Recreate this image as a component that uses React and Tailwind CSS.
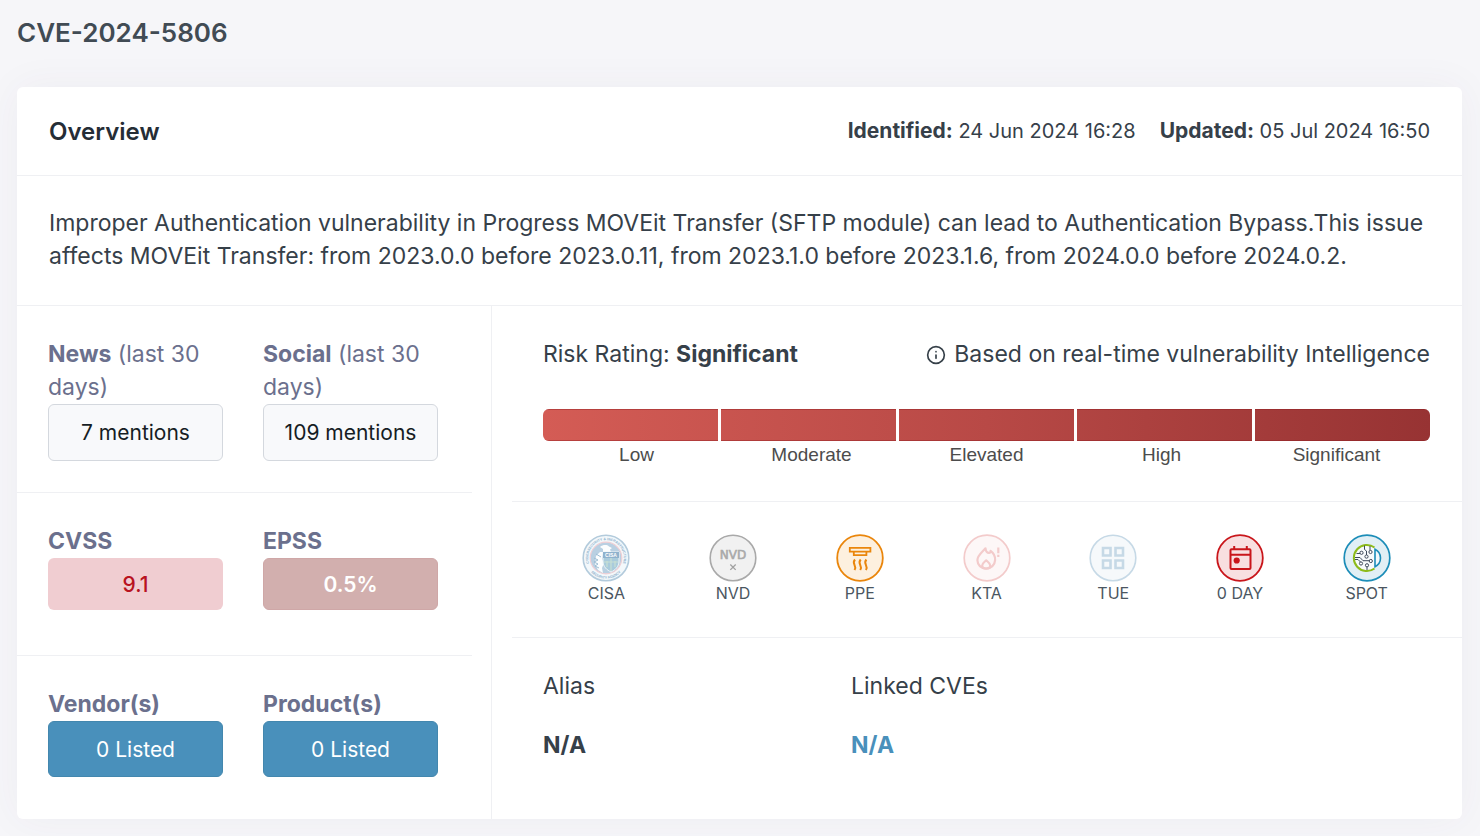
import { LuInfo } from 'react-icons/lu';

const levels = ['Low', 'Moderate', 'Elevated', 'High', 'Significant'];

function CisaIcon() {
    return (
        <svg viewBox="0 0 48 48" className="size-12" aria-hidden="true">
            <defs>
                <path id="cisa-top" d="M10.400 35.400a17.800 17.800 0 1 1 27.200 0" />
                <path id="cisa-bottom" d="M5.300 32.700a20.600 20.600 0 0 0 37.400 0" />
            </defs>
            <circle cx="24" cy="24" r="22.800" fill="#f3f8fb" stroke="#b3cbdc" strokeWidth="1.600" />
            <circle cx="24" cy="24" r="15.800" fill="#b9d0e2" stroke="#f0cfd4" strokeWidth="1.200" />
            <g fill="#8fb2cd" fontFamily="Liberation Sans, sans-serif" fontWeight="700" fontSize="3.500">
                <text><textPath href="#cisa-top" startOffset="50%" textAnchor="middle">CYBERSECURITY &amp; INFRASTRUCTURE</textPath></text>
                <text><textPath href="#cisa-bottom" startOffset="50%" textAnchor="middle">SECURITY AGENCY</textPath></text>
            </g>
            <path d="M18 13c3-2.500 7-2.500 9-.5l3 1.500-2 1.500 1 2.500H18l-4 4-1 8 3 6 5 3-1-5 2-5-2-4 1-6v-4z" fill="#fbfdfe" />
            <path d="M12 24l4 2-4 2 4 2-3 2 4 2M14 20l5 3" stroke="#9dbdd4" fill="none" />
            <path d="M21 18h16v9c0 6-4 9-8 11-4-2-8-5-8-11z" fill="#a9cbdc" stroke="#eef5f9" />
            <path d="M22 28h14M29 23v14M25 27v6M33 27v6" stroke="#c7dfd4" strokeWidth="1.200" />
            <rect x="21" y="18" width="16" height="6" fill="#8fb2cd" />
            <text x="29" y="22.800" textAnchor="middle" fontSize="5" fontWeight="700" fontFamily="Liberation Sans, sans-serif" fill="#fff">CISA</text>
        </svg>
    );
}

function NvdIcon() {
    return (
        <svg viewBox="0 0 48 48" className="size-12" aria-hidden="true">
            <circle cx="24" cy="24" r="22.800" fill="#f1f1f1" stroke="#a9a9a9" strokeWidth="1.600" />
            <text x="24" y="25" textAnchor="middle" fontSize="12" className="font-['DejaVu_Sans',sans-serif]" fill="#a9a9a9" stroke="#a9a9a9" strokeWidth=".6">NVD</text>
            <path d="M21.300 30.500l5.400 5.400M26.700 30.500l-5.400 5.400" stroke="#a0a0a0" strokeWidth="1.300" />
        </svg>
    );
}

function PpeIcon() {
    return (
        <svg viewBox="0 0 48 48" className="size-12" fill="none" stroke="#ea860c" strokeWidth="1.800" aria-hidden="true">
            <circle cx="24" cy="24" r="22.800" fill="#fdf0df" strokeWidth="1.800" />
            <path d="M13.800 13.800h20.600v3.800H13.800zM17.800 17.800v3.400h12.600v-3.400" />
            <path d="M19 25.500c-4 4.500 2.500 5.500-.5 10.500M24.700 25.500c-4 4.500 2.500 5.500-.5 10.500M30.400 25.500c-4 4.500 2.500 5.500-.5 10.500" strokeWidth="2" />
        </svg>
    );
}

function KtaIcon() {
    return (
        <svg viewBox="0 0 48 48" className="size-12" fill="none" stroke="#f3cbcb" strokeWidth="2.200" aria-hidden="true">
            <circle cx="24" cy="24" r="22.800" fill="#fdf7f7" strokeWidth="1.700" />
            <path d="M22.500 14.300c.3 3 2 4.500 3.500 4.500 1.200 0 1.700-.8 1.600-2 3.200 2.300 4.700 6 4.500 9.300-.3 5-4 8.400-9 8.400s-8.600-3.600-8.700-8.200c-.1-5 4.700-8 8.100-12z" strokeLinejoin="round" />
            <path d="M23.200 26.300c-2 1.800-4 3-4 5.100 0 2 1.800 3.200 4 3.200s4-1.200 4-3.200c0-2.100-2-3.300-4-5.100z" strokeLinejoin="round" />
            <path d="M35.300 13.500v5.800M35.300 20.800v2.200" />
        </svg>
    );
}

function TueIcon() {
    return (
        <svg viewBox="0 0 48 48" className="size-12" fill="none" stroke="#c6d9e6" strokeWidth="2.600" aria-hidden="true">
            <circle cx="24" cy="24" r="22.800" fill="#f6f9fb" strokeWidth="1.600" />
            <path d="M14 14h7.500v7.500H14zM26.500 14H34v7.500h-7.500zM14 26.500h7.500V34H14zM26.500 26.500H34V34h-7.500z" />
        </svg>
    );
}

function ZeroDayIcon() {
    return (
        <svg viewBox="0 0 48 48" className="size-12" fill="none" stroke="#c9161b" strokeWidth="2" aria-hidden="true">
            <circle cx="24" cy="24" r="22.800" fill="#f8dfe0" strokeWidth="1.800" />
            <rect x="14.500" y="15.300" width="20" height="19.700" rx="1" />
            <path d="M14.500 20.700h20M18.200 12v4M30.800 12v4" />
            <circle cx="20.700" cy="26.500" r="3.100" fill="#c9161b" stroke="none" />
        </svg>
    );
}

function SpotIcon() {
    return (
        <svg viewBox="0 0 48 48" className="size-12" fill="none" aria-hidden="true">
            <circle cx="24" cy="24" r="22.800" fill="#e1eff5" stroke="#1c8db8" strokeWidth="1.700" />
            <path d="M31.500 13.300a13 13 0 1 0 0 21.400z" fill="#f8fbfc" />
            <path d="M31.500 34.500a13 13 0 1 1 0-21" stroke="#8dbb1a" strokeWidth="2" />
            <path d="M32 15.300c3.600 1.800 5.500 5 5.500 8.700s-1.900 6.900-5.500 8.700z" fill="#f2f8fb" stroke="#1c8db8" strokeWidth="1.600" />
            <g stroke="#3f4b5c" strokeWidth="1">
                <path d="M12 23.500h5l3 3.200h7M12 25.500h3l3 3M21.500 11.500v4l2 1.500v4M27 12v4.500M13.500 19.500h3.500M24 36v-4" />
                <g fill="#fff">
                    <circle cx="18.500" cy="18.800" r="1.600" />
                    <circle cx="27.500" cy="18" r="1.600" />
                    <circle cx="23.500" cy="22.600" r="1.600" />
                    <circle cx="27.800" cy="27" r="1.600" />
                    <circle cx="18" cy="29.500" r="1.600" />
                    <circle cx="24" cy="31.300" r="1.600" />
                </g>
            </g>
        </svg>
    );
}

const indicators = [
    { label: 'CISA',  Icon: CisaIcon },
    { label: 'NVD',   Icon: NvdIcon },
    { label: 'PPE',   Icon: PpeIcon },
    { label: 'KTA',   Icon: KtaIcon },
    { label: 'TUE',   Icon: TueIcon },
    { label: '0 DAY', Icon: ZeroDayIcon },
    { label: 'SPOT',  Icon: SpotIcon },
];

function Stat({ label, note, children }) {
    return (
        <div className="flex flex-col text-[#6b708d]">
            <p><strong className="font-bold">{label}</strong>{note && ` ${note}`}</p>
            {children}
        </div>
    );
}

export default function App() {
    return (
        <main className="min-h-screen bg-[#f6f6f9] pl-[17px] pr-[18px] pb-[17px] font-['Inter',sans-serif] text-[23px] leading-[33px] text-[#364049]">
            <h1 className="pt-4 pb-[38px] text-[26px] font-semibold text-[#414b54]">CVE-2024-5806</h1>

            <section className="rounded-md bg-white shadow-[0_0_40px_rgba(82,63,105,0.05)]">
                <header className="flex items-center justify-between border-b border-[#eff0f3] px-8 py-[27px]">
                    <h2 className="text-[24px] font-semibold text-[#252d36]">Overview</h2>
                    <div className="flex gap-6 text-[20px]">
                        <p><strong className="text-[21px] font-bold">Identified:</strong> 24 Jun 2024 16:28</p>
                        <p><strong className="text-[21px] font-bold">Updated:</strong> 05 Jul 2024 16:50</p>
                    </div>
                </header>

                <p className="border-b border-[#eff0f3] px-8 pt-[31px] pb-8">
                    Improper Authentication vulnerability in Progress MOVEit Transfer (SFTP module) can lead to Authentication Bypass.This issue affects MOVEit Transfer: from 2023.0.0 before 2023.0.11, from 2023.1.0 before 2023.1.6, from 2024.0.0 before 2024.0.2.
                </p>

                <div className="flex">
                    {/* Scores */}
                    <div className="w-[475px] shrink-0 border-r border-[#eff0f3] pr-[19px]">
                        <div className="grid grid-cols-2 gap-10 border-b border-[#eff0f3] pl-[31px] pr-[34px] pt-8 pb-[31px]">
                            <Stat label="News" note="(last 30 days)">
                                <button className="h-[57px] rounded-md border border-[#d4d8de] bg-[#f8f9fb] text-[21px] text-[#161d24]">7 mentions</button>
                            </Stat>
                            <Stat label="Social" note="(last 30 days)">
                                <button className="h-[57px] rounded-md border border-[#d4d8de] bg-[#f8f9fb] text-[21px] text-[#161d24]">109 mentions</button>
                            </Stat>
                        </div>
                        <div className="grid grid-cols-2 gap-10 border-b border-[#eff0f3] pl-[31px] pr-[34px] pt-8 pb-[45px]">
                            <Stat label="CVSS">
                                <div className="flex h-[52px] items-center justify-center rounded-md bg-[#f0cdd1] text-[21px] font-medium text-[#b81220]">9.1</div>
                            </Stat>
                            <Stat label="EPSS">
                                <div className="flex h-[52px] items-center justify-center rounded-md border border-[#cfa7a7] bg-[#d2afae] text-[21px] font-semibold text-white">0.5%</div>
                            </Stat>
                        </div>
                        <div className="grid grid-cols-2 gap-10 pl-[31px] pr-[34px] pt-8 pb-[42px]">
                            <Stat label="Vendor(s)">
                                <button className="h-14 rounded-md border border-[#4387ae] bg-[#4990bb] text-[21px] text-white">0 Listed</button>
                            </Stat>
                            <Stat label="Product(s)">
                                <button className="h-14 rounded-md border border-[#4387ae] bg-[#4990bb] text-[21px] text-white">0 Listed</button>
                            </Stat>
                        </div>
                    </div>

                    {/* Rating and threat indicators */}
                    <div className="min-w-0 flex-1 pl-5">
                        <div className="border-b border-[#eff0f3] pl-[31px] pr-8 pt-8 pb-[34px]">
                            <div className="flex items-center justify-between">
                                <p>Risk Rating: <strong className="font-bold">Significant</strong></p>
                                <p className="flex items-center gap-2">
                                    <LuInfo className="size-5" />
                                    Based on real-time vulnerability Intelligence
                                </p>
                            </div>
                            <div className="mt-[38px] flex h-8 overflow-hidden rounded-md bg-linear-to-r from-[#d45c55] via-[#b84946] to-[#973333]">
                                {levels.map((level) => (
                                    <div key={level} className="flex-1 border-r-3 border-white last:border-r-0">
                                        <div className="h-full border-y border-[#8e1a1f]/40" />
                                    </div>
                                ))}
                            </div>
                            <div className="flex px-1.5 pt-0.5 font-['Liberation_Sans',sans-serif] text-[19px] leading-6 text-[#4c4c4c]">
                                {levels.map((level) => (
                                    <span key={level} className="flex-1 text-center">{level}</span>
                                ))}
                            </div>
                        </div>

                        <ul className="flex border-b border-[#eff0f3] pl-[31px] pr-8 pt-8 pb-[33px]">
                            {indicators.map(({ label, Icon }) => (
                                <li key={label} className="flex flex-1 flex-col items-center text-[16px] leading-[22px] text-[#4b5661]">
                                    <Icon />
                                    {label}
                                </li>
                            ))}
                        </ul>

                        <dl className="grid grid-cols-[308px_1fr] pl-[31px] pr-8 pt-8">
                            <div className="flex flex-col gap-[26px]">
                                <dt>Alias</dt>
                                <dd className="font-bold">N/A</dd>
                            </div>
                            <div className="flex flex-col gap-[26px]">
                                <dt>Linked CVEs</dt>
                                <dd><a href="#linked-cves" className="font-bold text-[#4990bb]">N/A</a></dd>
                            </div>
                        </dl>
                    </div>
                </div>
            </section>
        </main>
    );
}
